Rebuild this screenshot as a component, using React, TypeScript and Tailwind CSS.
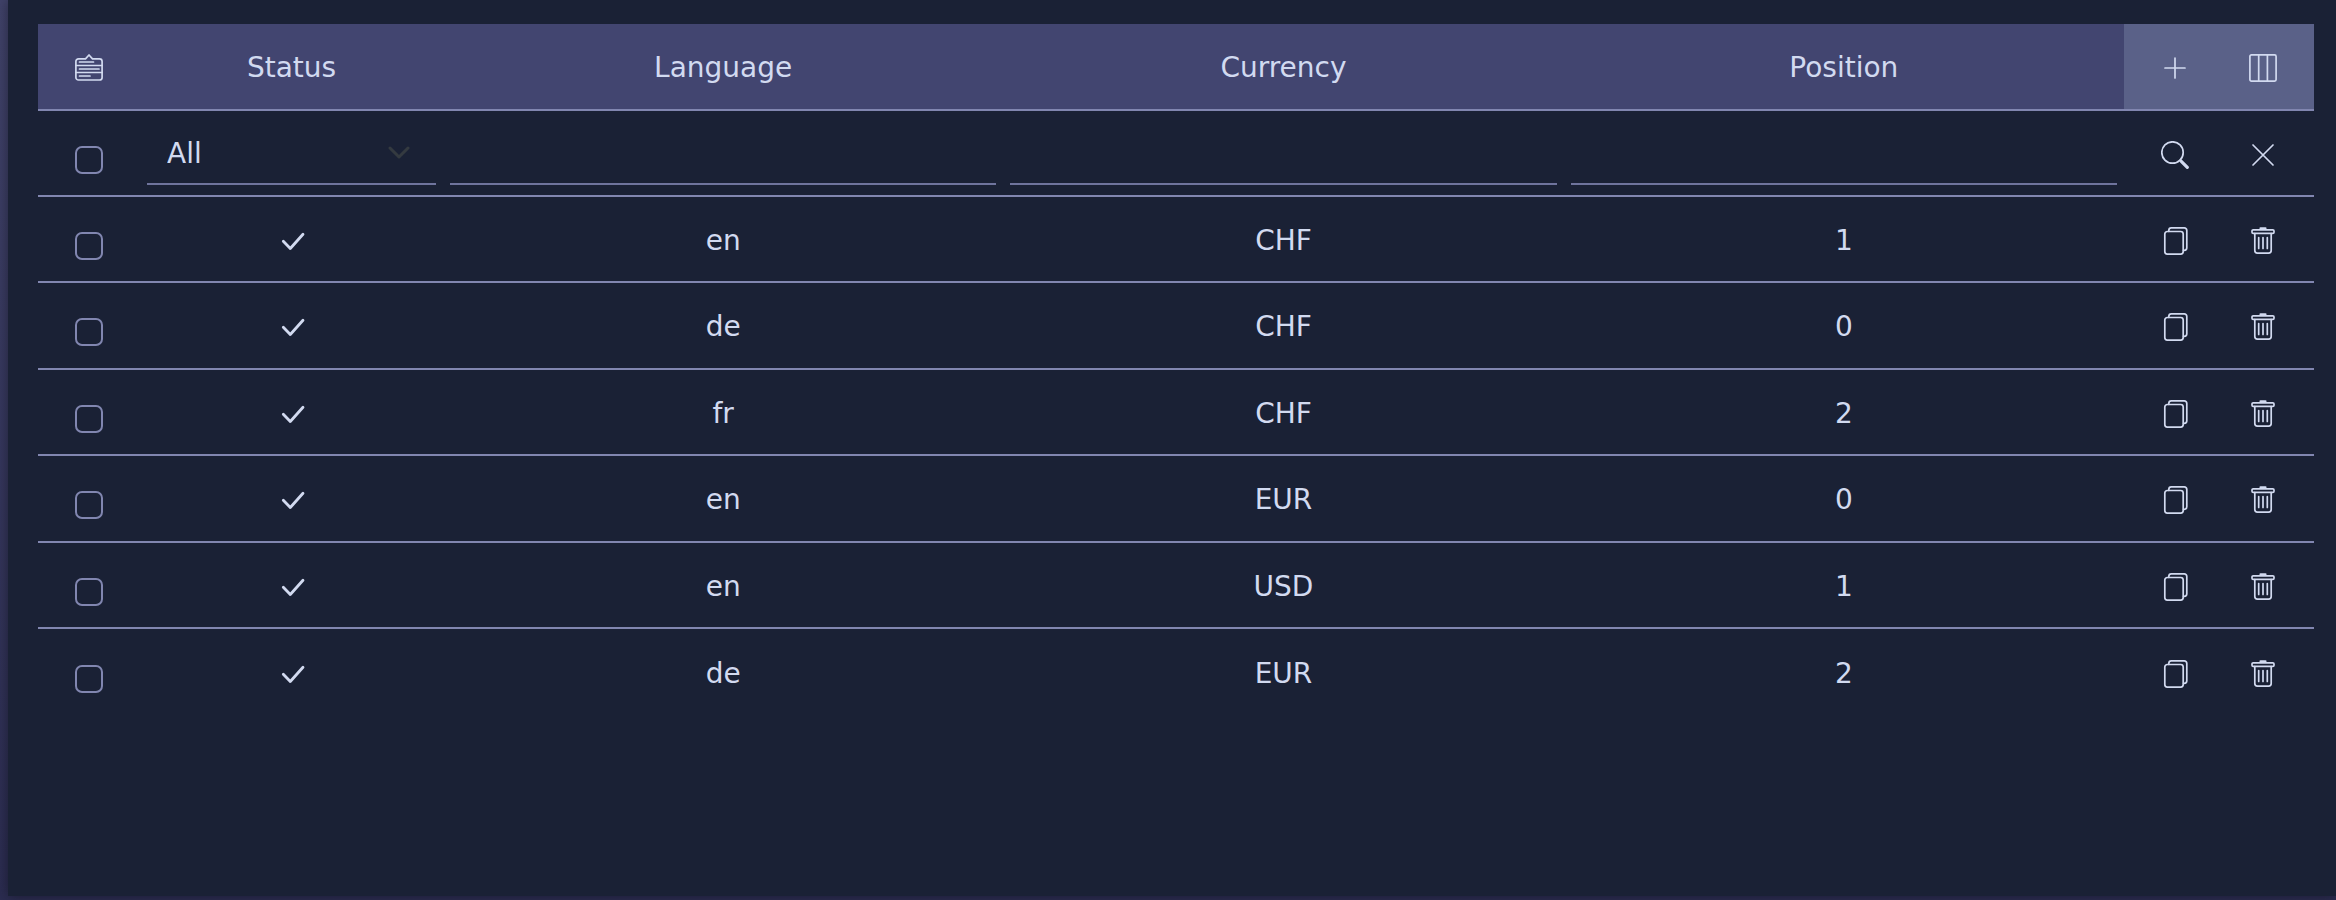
import { ReactNode } from 'react';

interface Shop {
  language: string;
  currency: string;
  position: number;
}

const shops: Shop[] = [
  { language: 'en', currency: 'CHF', position: 1 },
  { language: 'de', currency: 'CHF', position: 0 },
  { language: 'fr', currency: 'CHF', position: 2 },
  { language: 'en', currency: 'EUR', position: 0 },
  { language: 'en', currency: 'USD', position: 1 },
  { language: 'de', currency: 'EUR', position: 2 },
];

interface IconProps {
  children: ReactNode;
  className?: string;
  strokeWidth?: number;
}

const Icon = ({ children, className = '', strokeWidth = 1.7 }: IconProps) => (
  <svg
    viewBox="0 0 28 28"
    fill="none"
    stroke="currentColor"
    strokeWidth={strokeWidth}
    strokeLinecap="round"
    strokeLinejoin="round"
    aria-hidden="true"
    className={`block h-7 w-7 ${className}`}
  >
    {children}
  </svg>
);

const BatchIcon = () => (
  <Icon>
    <path d="M3.5 4.8h7L14 1l3.5 3.8h7a2.6 2.6 0 0 1 2.6 2.6v16a2.6 2.6 0 0 1-2.6 2.6h-21A2.6 2.6 0 0 1 .9 23.4V7.4a2.6 2.6 0 0 1 2.6-2.6Z" />
    <path d="M1 11.500h26M1 18.500h26M4.500 8h14M4.500 15h19.500M4.500 22h10.500" />
  </Icon>
);

const PlusIcon = () => (
  <Icon>
    <path d="M14 4v20M4 14h20" />
  </Icon>
);

const ColumnsIcon = () => (
  <Icon>
    <rect x="0.9" y="0.9" width="26.2" height="26.2" rx="1.5" />
    <path d="M9.7 1v26M18.4 1v26" />
  </Icon>
);

const SearchIcon = () => (
  <Icon>
    <circle cx="11.5" cy="11.5" r="10.7" />
    <path d="m19.2 19.2 1.3 1.3" />
    <path d="m20.3 20.3 6 6" strokeWidth="3.2" />
  </Icon>
);

const CloseIcon = () => (
  <Icon>
    <path d="m4 4 20 20M24 4 4 24" />
  </Icon>
);

const CopyIcon = () => (
  <Icon>
    <rect x="3.8" y="4.5" width="18.4" height="22.6" rx="2.5" />
    <path d="M7.8 4.3V3.4a2.5 2.5 0 0 1 2.500-2.500h13a2.500 2.500 0 0 1 2.500 2.500v17.400a2.500 2.500 0 0 1-2.500 2.500h-.8" />
  </Icon>
);

const TrashIcon = () => (
  <Icon>
    <rect x="3" y="2.8" width="22" height="3.6" rx="1.2" />
    <path d="M11.5 1.3h5" strokeWidth="2.2" />
    <path d="M5.800 6.500v17a2.600 2.600 0 0 0 2.600 2.600h11.200a2.600 2.600 0 0 0 2.600-2.600v-17M9.700 10.500v11M14 10.500v11M18.300 10.500v11" />
  </Icon>
);

const CheckIcon = () => (
  <Icon strokeWidth={2.8} className="mx-auto">
    <path d="m5.3 14.200 7 7.300L25 7.200" />
  </Icon>
);

const IconButton = ({ label, children }: { label: string; children: ReactNode }) => (
  <button type="button" aria-label={label} className="block cursor-pointer">
    {children}
  </button>
);

const Checkbox = ({ label }: { label: string }) => (
  <input
    type="checkbox"
    aria-label={label}
    className="mx-auto mt-[10px] block h-7 w-7 appearance-none rounded-[7px] border-2 border-[#8186b0] checked:bg-[#8186b0]"
  />
);

const FilterInput = ({ label }: { label: string }) => (
  <input
    type="text"
    aria-label={label}
    className="block h-16 w-full border-b-2 border-[#6f749d] bg-transparent px-5 outline-none"
  />
);

const Actions = ({ children }: { children: ReactNode }) => (
  <div className="flex justify-between px-[37px]">{children}</div>
);

export default function App() {
  return (
    <div className="min-h-screen bg-linear-to-b from-[#404269] to-[#2b2c50] pb-1 pl-2 font-['DejaVu_Sans',Verdana,sans-serif] text-[28px] leading-8 text-[#d2daf0]">
      <main className="min-h-[896px] bg-[#1a2135] py-6 pr-[22px] pl-[30px] shadow-[0_0_12px_rgba(0,0,0,0.4)]">
        <table className="w-full table-fixed border-collapse text-center">
          <colgroup>
            <col className="w-[102px]" />
            <col className="w-[303px]" />
            <col />
            <col />
            <col />
            <col className="w-[190px]" />
          </colgroup>
          <thead>
            <tr className="h-[86px] border-b-2 border-[#8186b0] bg-[#424570]">
              <th className="pt-[3px] font-normal">
                <div className="flex justify-center">
                  <IconButton label="Batch actions">
                    <BatchIcon />
                  </IconButton>
                </div>
              </th>
              <th className="pt-[3px] font-normal">Status</th>
              <th className="pt-[3px] font-normal">Language</th>
              <th className="pt-[3px] font-normal">Currency</th>
              <th className="pt-[3px] font-normal">Position</th>
              <th className="bg-[#5a6188] pt-[3px] font-normal">
                <Actions>
                  <IconButton label="Add">
                    <PlusIcon />
                  </IconButton>
                  <IconButton label="Columns">
                    <ColumnsIcon />
                  </IconButton>
                </Actions>
              </th>
            </tr>
          </thead>
          <tbody>
            <tr className="h-[86px] border-b-2 border-[#8186b0]">
              <td className="pt-[3px]">
                <Checkbox label="Select all" />
              </td>
              <td className="px-[7px]">
                <div className="relative">
                  <select
                    aria-label="Status"
                    className="block h-16 w-full appearance-none border-b-2 border-[#6f749d] bg-transparent px-5 pt-[3px] outline-none"
                  >
                    <option>All</option>
                    <option>Active</option>
                    <option>Inactive</option>
                  </select>
                  <svg
                    viewBox="0 0 22 14"
                    fill="none"
                    stroke="#343a40"
                    strokeWidth="3"
                    strokeLinecap="round"
                    strokeLinejoin="round"
                    className="pointer-events-none absolute top-[25px] right-[26px] h-[14px] w-[22px]"
                  >
                    <path d="m2 2 9 9 9-9" />
                  </svg>
                </div>
              </td>
              <td className="px-[7px]">
                <FilterInput label="Language" />
              </td>
              <td className="px-[7px]">
                <FilterInput label="Currency" />
              </td>
              <td className="px-[7px]">
                <FilterInput label="Position" />
              </td>
              <td className="pt-[3px]">
                <Actions>
                  <IconButton label="Search">
                    <SearchIcon />
                  </IconButton>
                  <IconButton label="Reset">
                    <CloseIcon />
                  </IconButton>
                </Actions>
              </td>
            </tr>
            {shops.map(({ language, currency, position }, index) => (
              <tr
                key={index}
                className="border-b-2 border-[#8186b0] last:border-b-0 odd:h-[87px] even:h-[86px] last:h-[84px]"
              >
                <td className="pt-[3px]">
                  <Checkbox label={`Select row ${index + 1}`} />
                </td>
                <td className="pt-[3px]">
                  <CheckIcon />
                </td>
                <td className="pt-[3px]">{language}</td>
                <td className="pt-[3px]">{currency}</td>
                <td className="pt-[3px]">{position}</td>
                <td className="pt-[3px]">
                  <Actions>
                    <IconButton label="Copy">
                      <CopyIcon />
                    </IconButton>
                    <IconButton label="Delete">
                      <TrashIcon />
                    </IconButton>
                  </Actions>
                </td>
              </tr>
            ))}
          </tbody>
        </table>
      </main>
    </div>
  );
}
